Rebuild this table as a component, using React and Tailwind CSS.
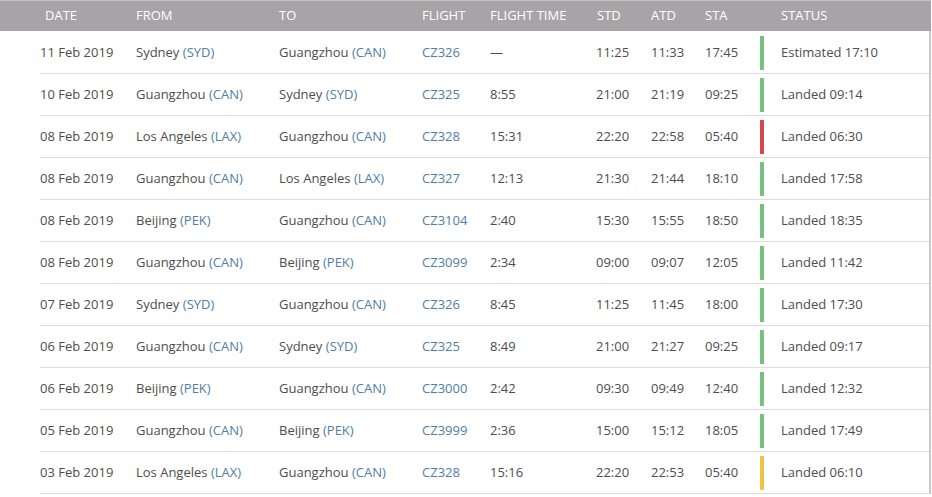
const flights = [
  { date: '11 Feb 2019', from: ['Sydney', 'SYD'], to: ['Guangzhou', 'CAN'], flight: 'CZ326', time: '—', std: '11:25', atd: '11:33', sta: '17:45', bar: 'green', status: 'Estimated 17:10' },
  { date: '10 Feb 2019', from: ['Guangzhou', 'CAN'], to: ['Sydney', 'SYD'], flight: 'CZ325', time: '8:55', std: '21:00', atd: '21:19', sta: '09:25', bar: 'green', status: 'Landed 09:14' },
  { date: '08 Feb 2019', from: ['Los Angeles', 'LAX'], to: ['Guangzhou', 'CAN'], flight: 'CZ328', time: '15:31', std: '22:20', atd: '22:58', sta: '05:40', bar: 'red', status: 'Landed 06:30' },
  { date: '08 Feb 2019', from: ['Guangzhou', 'CAN'], to: ['Los Angeles', 'LAX'], flight: 'CZ327', time: '12:13', std: '21:30', atd: '21:44', sta: '18:10', bar: 'green', status: 'Landed 17:58' },
  { date: '08 Feb 2019', from: ['Beijing', 'PEK'], to: ['Guangzhou', 'CAN'], flight: 'CZ3104', time: '2:40', std: '15:30', atd: '15:55', sta: '18:50', bar: 'green', status: 'Landed 18:35' },
  { date: '08 Feb 2019', from: ['Guangzhou', 'CAN'], to: ['Beijing', 'PEK'], flight: 'CZ3099', time: '2:34', std: '09:00', atd: '09:07', sta: '12:05', bar: 'green', status: 'Landed 11:42' },
  { date: '07 Feb 2019', from: ['Sydney', 'SYD'], to: ['Guangzhou', 'CAN'], flight: 'CZ326', time: '8:45', std: '11:25', atd: '11:45', sta: '18:00', bar: 'green', status: 'Landed 17:30' },
  { date: '06 Feb 2019', from: ['Guangzhou', 'CAN'], to: ['Sydney', 'SYD'], flight: 'CZ325', time: '8:49', std: '21:00', atd: '21:27', sta: '09:25', bar: 'green', status: 'Landed 09:17' },
  { date: '06 Feb 2019', from: ['Beijing', 'PEK'], to: ['Guangzhou', 'CAN'], flight: 'CZ3000', time: '2:42', std: '09:30', atd: '09:49', sta: '12:40', bar: 'green', status: 'Landed 12:32' },
  { date: '05 Feb 2019', from: ['Guangzhou', 'CAN'], to: ['Beijing', 'PEK'], flight: 'CZ3999', time: '2:36', std: '15:00', atd: '15:12', sta: '18:05', bar: 'green', status: 'Landed 17:49' },
  { date: '03 Feb 2019', from: ['Los Angeles', 'LAX'], to: ['Guangzhou', 'CAN'], flight: 'CZ328', time: '15:16', std: '22:20', atd: '22:53', sta: '05:40', bar: 'yellow', status: 'Landed 06:10' },
];

const barColors = {
  green: 'bg-[#74c27c]',
  red: 'bg-[#d4474b]',
  yellow: 'bg-[#f1c23f]',
};

const Place = ({ place }) => (
  <span>
    {place[0]} <span className="text-[#4f7ea6]">({place[1]})</span>
  </span>
);

const App = () => {
  return (
    <div
      className="w-[932px] h-[497px] bg-white overflow-hidden text-[13px] text-[#4d4d4d]"
      style={{ fontFamily: '"Open Sans", "Liberation Sans", sans-serif' }}
    >
      {/* Header */}
      <div className="flex items-center h-[31px] w-[931px] bg-[#a7a3a6] text-white border-t border-[#c4c1c3]">
        <div className="w-[136px] pl-[45px]">DATE</div>
        <div className="w-[143px]">FROM</div>
        <div className="w-[143px]">TO</div>
        <div className="w-[68px]">FLIGHT</div>
        <div className="w-[107px]">FLIGHT TIME</div>
        <div className="w-[54px]">STD</div>
        <div className="w-[54px]">ATD</div>
        <div className="w-[76px]">STA</div>
        <div>STATUS</div>
      </div>

      {/* Rows */}
      <div className="w-[931px] border-r-2 border-[#c9c9c9] pl-[40px] pt-px">
        {flights.map((f, i) => (
          <div key={i} className="flex items-center h-[42px] border-b border-[#dedede]">
            <div className="w-[96px]">{f.date}</div>
            <div className="w-[143px]"><Place place={f.from} /></div>
            <div className="w-[143px]"><Place place={f.to} /></div>
            <div className="w-[68px] text-[#4f7ea6]">{f.flight}</div>
            <div className="w-[106px]">{f.time}</div>
            <div className="w-[55px]">{f.std}</div>
            <div className="w-[54px]">{f.atd}</div>
            <div className="w-[55px]">{f.sta}</div>
            <div className="w-[21px] flex items-center">
              <div className={`w-[4px] h-[34px] ${barColors[f.bar]}`}></div>
            </div>
            <div>{f.status}</div>
          </div>
        ))}
      </div>
    </div>
  );
};

export default App;
